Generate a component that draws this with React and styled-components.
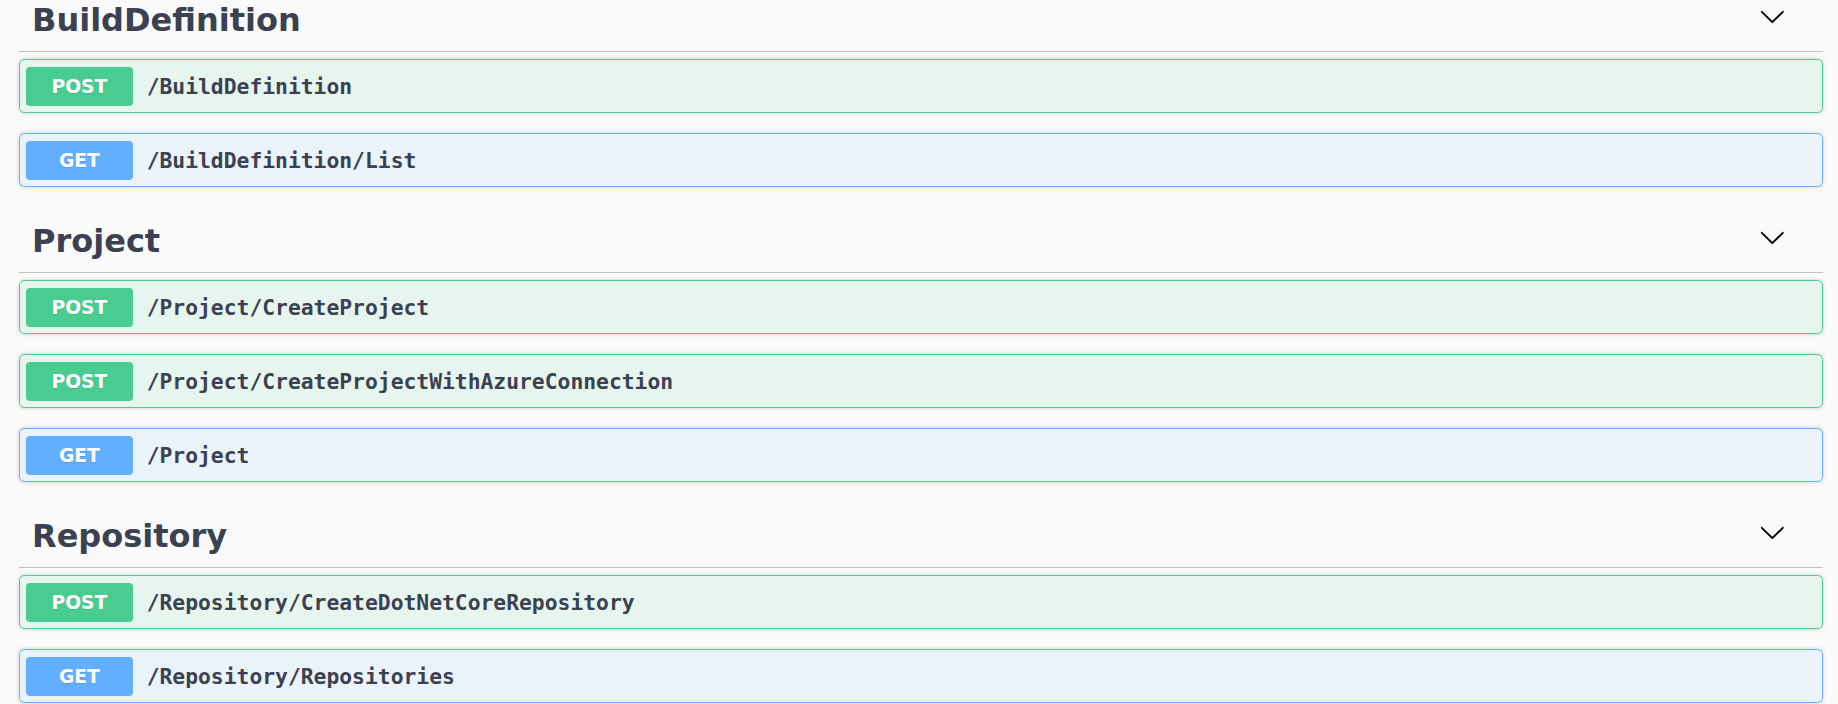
import React from "react";
import styled, { createGlobalStyle } from "styled-components";

const GlobalStyle = createGlobalStyle`
  html, body {
    margin: 0;
    padding: 0;
    background: #fafafa;
    overflow: hidden;
  }
  * {
    box-sizing: border-box;
  }
`;

const methodColors = {
  post: "73, 204, 144",
  get: "97, 175, 254",
};

const Wrapper = styled.div`
  margin-top: -14px;
  padding: 0 15px 0 19px;
  font-family: "DejaVu Sans", "Liberation Sans", sans-serif;
  color: #3b4151;
`;

const TagSection = styled.section`
  display: flex;
  flex-direction: column;
`;

const TagHeader = styled.h3`
  display: flex;
  align-items: center;
  height: 66px;
  margin: 0 0 7px;
  padding: 2px 37.5px 0 13px;
  border-bottom: 1px solid rgba(59, 65, 81, 0.3);
  font-size: 32px;
  font-weight: 700;
  line-height: 1;
  color: #3b4151;
  cursor: pointer;
`;

const TagName = styled.span`
  flex: 1;
`;

const Toggle = styled.button`
  display: flex;
  padding: 0;
  margin: 0 0 6.6px;
  border: none;
  background: none;
  cursor: pointer;

  svg {
    width: 26.67px;
    height: 26.67px;
    fill: #000;
  }
`;

const OpBlock = styled.div`
  display: flex;
  align-items: center;
  height: 54px;
  margin: 0 0 20px;
  padding: 0 6px;
  border: 1px solid rgb(${(p) => methodColors[p.$method]});
  border-radius: 5.33px;
  background: rgba(${(p) => methodColors[p.$method]}, 0.1);
  box-shadow: 0 0 4px rgba(0, 0, 0, 0.19);
  cursor: pointer;
`;

const MethodBadge = styled.span`
  display: flex;
  align-items: center;
  justify-content: center;
  width: 106.67px;
  height: 39px;
  flex-shrink: 0;
  border-radius: 4px;
  background: rgb(${(p) => methodColors[p.$method]});
  color: #fff;
  font-family: "DejaVu Sans", "Liberation Sans", sans-serif;
  font-size: 18.67px;
  font-weight: 700;
  text-shadow: 0 1px 0 rgba(0, 0, 0, 0.1);
  text-transform: uppercase;
`;

const Path = styled.span`
  padding: 0 14px;
  font-family: "DejaVu Sans Mono", "Liberation Mono", monospace;
  font-size: 21.33px;
  font-weight: 700;
  color: #3b4151;
`;

const Chevron = () => (
  <svg viewBox="0 0 20 20">
    <path d="M17.418 6.109c.272-.268.709-.268.979 0s.271.701 0 .969l-7.908 7.83c-.27.268-.707.268-.979 0l-7.908-7.83c-.27-.268-.27-.701 0-.969.271-.268.709-.268.979 0L10 13.25l7.418-7.141z" />
  </svg>
);

const tags = [
  {
    name: "BuildDefinition",
    ops: [
      { method: "post", path: "/BuildDefinition" },
      { method: "get", path: "/BuildDefinition/List" },
    ],
  },
  {
    name: "Project",
    ops: [
      { method: "post", path: "/Project/CreateProject" },
      { method: "post", path: "/Project/CreateProjectWithAzureConnection" },
      { method: "get", path: "/Project" },
    ],
  },
  {
    name: "Repository",
    ops: [
      { method: "post", path: "/Repository/CreateDotNetCoreRepository" },
      { method: "get", path: "/Repository/Repositories" },
    ],
  },
];

export default function App() {
  return (
    <>
      <GlobalStyle />
      <Wrapper>
        {tags.map((tag) => (
          <TagSection key={tag.name}>
            <TagHeader>
              <TagName>{tag.name}</TagName>
              <Toggle aria-label="collapse">
                <Chevron />
              </Toggle>
            </TagHeader>
            {tag.ops.map((op) => (
              <OpBlock key={op.method + op.path} $method={op.method}>
                <MethodBadge $method={op.method}>{op.method}</MethodBadge>
                <Path>{op.path}</Path>
              </OpBlock>
            ))}
          </TagSection>
        ))}
      </Wrapper>
    </>
  );
}
